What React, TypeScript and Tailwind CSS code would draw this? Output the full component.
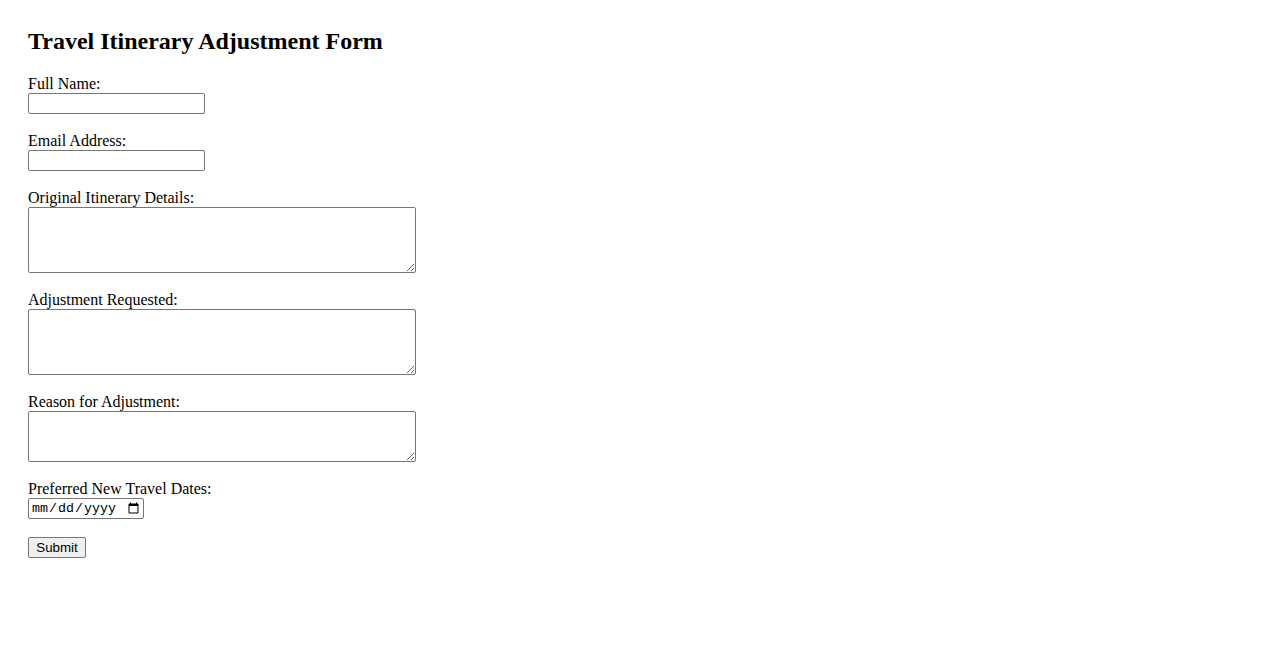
import React from "react";

const inputCls =
  "block w-[177px] h-[21px] border border-[#767676] rounded-[2px] bg-white px-[2px] text-[13.33px] font-['Liberation_Sans',Arial,sans-serif] outline-none";
const areaCls =
  "block w-[388px] border border-[#767676] rounded-[2px] bg-white px-[2px] py-[2px] text-[13.33px] leading-[15px] font-['Liberation_Mono',monospace] resize";

function Label({ children, htmlFor }: { children: React.ReactNode; htmlFor: string }) {
  return (
    <label htmlFor={htmlFor} className="block text-[16px] leading-[18px]">
      {children}
    </label>
  );
}

export default function App() {
  return (
    <div className="min-h-[650px] bg-white text-black font-['Liberation_Serif','Times_New_Roman',serif] pt-[28px] pl-[28px]">
      <h2 className="text-[24px] font-bold leading-[27px] mb-[20px]">
        Travel Itinerary Adjustment Form
      </h2>
      <form onSubmit={(e) => e.preventDefault()}>
        <div className="mb-[18px]">
          <Label htmlFor="name">Full Name:</Label>
          <input id="name" type="text" className={inputCls} />
        </div>
        <div className="mb-[18px]">
          <Label htmlFor="email">Email Address:</Label>
          <input id="email" type="email" className={inputCls} />
        </div>
        <div className="mb-[18px]">
          <Label htmlFor="orig">Original Itinerary Details:</Label>
          <textarea id="orig" className={`${areaCls} h-[66px]`} />
        </div>
        <div className="mb-[18px]">
          <Label htmlFor="adj">Adjustment Requested:</Label>
          <textarea id="adj" className={`${areaCls} h-[66px]`} />
        </div>
        <div className="mb-[18px]">
          <Label htmlFor="reason">Reason for Adjustment:</Label>
          <textarea id="reason" className={`${areaCls} h-[51px]`} />
        </div>
        <div className="mb-[18px]">
          <Label htmlFor="dates">Preferred New Travel Dates:</Label>
          <input
            id="dates"
            type="date"
            className="block w-[116px] h-[21px] border border-[#767676] rounded-[2px] bg-white pl-[2px] pr-[1px] text-[13.33px] font-['Liberation_Mono',monospace]"
          />
        </div>
        <button
          type="submit"
          className="block w-[58px] h-[21px] border border-[#767676] rounded-[2px] bg-[#efefef] text-[13.33px] leading-[15px] font-['Liberation_Sans',Arial,sans-serif] px-[6px]"
        >
          Submit
        </button>
      </form>
    </div>
  );
}
